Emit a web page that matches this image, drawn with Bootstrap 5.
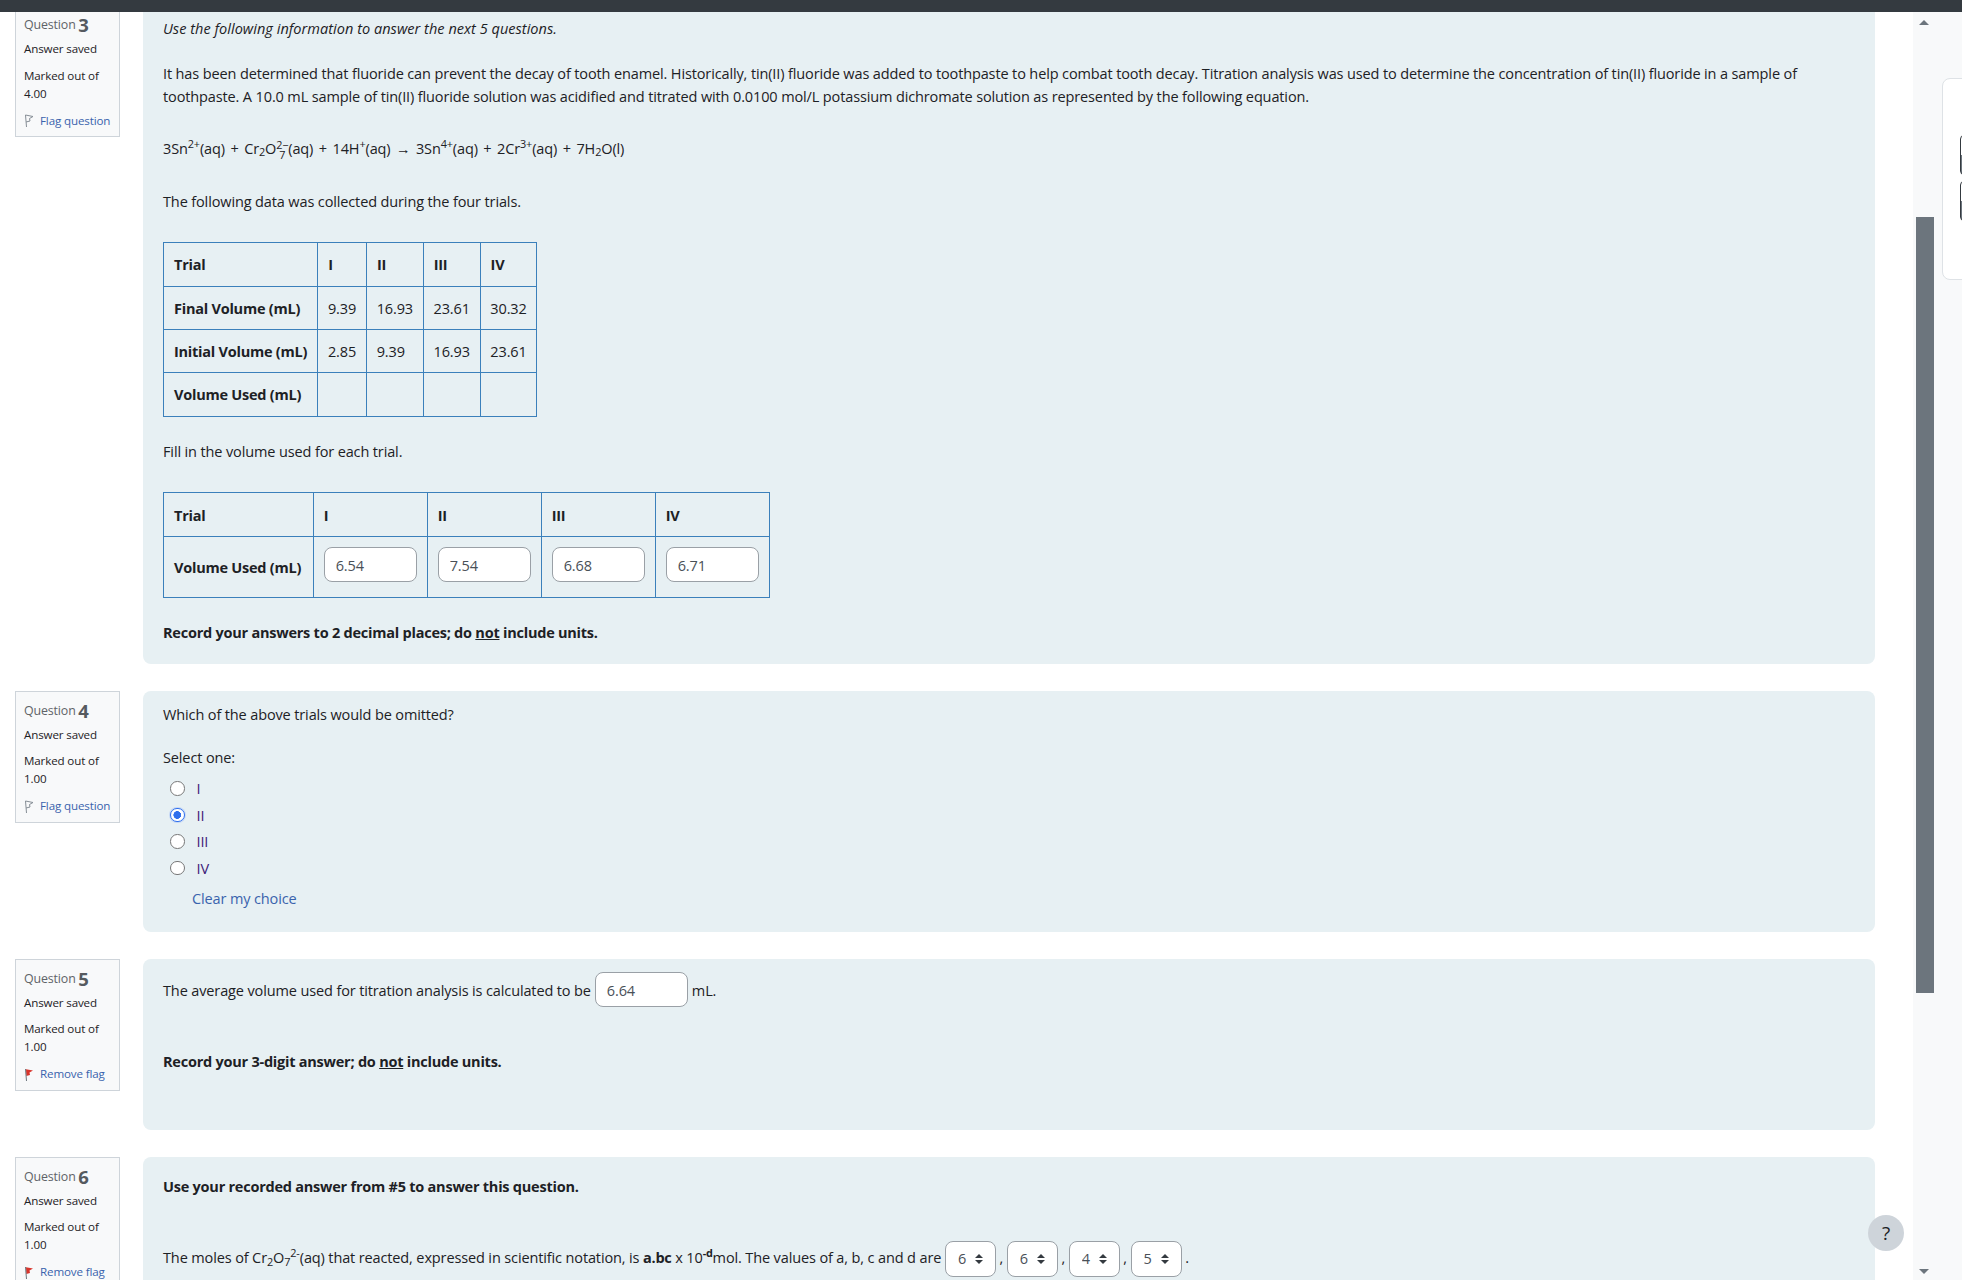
<!DOCTYPE html>
<html lang="en">
<head>
<meta charset="utf-8">
<title>Quiz</title>
<link href="https://cdn.jsdelivr.net/npm/bootstrap@5.3.0/dist/css/bootstrap.min.css" rel="stylesheet">
<style>
html,body{height:1280px;overflow:hidden;background:#fff}
body{font-family:"Open Sans","Noto Sans",sans-serif;font-size:14.53px;line-height:24px;color:#1d2125;letter-spacing:-.135px}
b,.fw-bold,th{letter-spacing:-.24px}
.fst-italic{letter-spacing:.03px}
.topstrip{height:12px;background:#343a40}
.shell{height:1268px}
.pagecol{flex:1 1 auto;min-width:0;overflow:hidden;padding:0 38px 0 15px}
.qrow{gap:23px;margin-bottom:27px}
.qinfo{flex:0 0 105px;width:105px;background:#f8f9fa;border:1px solid #ced4da;padding:0 8px 6px;font-size:11.6px;line-height:18px;height:132px}
.qinfo.cut{border-top:0;height:125px}
.qinfo p{margin:0}
.qtitle{color:#5f6368;font-size:12.4px;height:24px;margin-top:6.5px;display:flex;align-items:center;gap:2.5px}
.qinfo.cut .qtitle{margin-top:1px;height:24px}
.qtitle b{font-size:18.5px;color:#555a5f;letter-spacing:0}
.qinfo .qstate{height:23px;margin-bottom:6.5px;padding-top:3px}
.qflag{display:flex;align-items:center;gap:6px;margin-top:9.25px;color:#3a63ad;white-space:nowrap}
.qflag svg{flex:none}
.qbody{flex:1 1 auto;min-width:0;background:#e7f0f3;border-radius:8px;padding:0 20px}
.qbody.cut{border-top-left-radius:0;border-top-right-radius:0;height:652px}
.qbody p{margin:0}
.ionstack{display:inline-flex;flex-direction:column;vertical-align:middle;font-size:10.8px;line-height:10px;text-align:center}
.eqline{word-spacing:1.9px}
.datatable{width:auto;margin:0;--bs-table-bg:transparent;--bs-table-border-color:#3b80bb;--bs-table-color:#1d2125;border-color:#3b80bb}
.datatable td,.datatable th{padding:9px 10px;line-height:24px;font-weight:400;vertical-align:middle}
.datatable th{font-weight:700}
.tbl1 td,.tbl1 th{height:43.4px;white-space:nowrap}
.tbl1 td{padding:9px 9.75px}
.tbl2 tr:first-child th{height:44.5px}
.tbl2 th:first-child{padding-right:11.5px}
.tbl2 .colw{width:114px}
.tbl2 .ans{padding:10px 10px 15px}
.ans-input{width:93px;height:35px;padding:0 11px;font-size:14.53px;letter-spacing:-.135px;font-family:inherit;color:#495057;border:1px solid #9aa0a6;border-radius:8px;background:#fff;box-shadow:none}
.choice{height:26.6px;margin:0;padding-left:32px;display:flex;align-items:center;color:#3d1a78}
.choice .form-check-input{float:none;margin:0 12px 0 -25px;width:14.5px;height:14.5px;border-color:#777}
.choice .form-check-input:checked{background-color:#fff;background-image:radial-gradient(circle,#2f6fed 0 3.6px,#fff 4.1px);border-color:#2f6fed;box-shadow:0 0 0 1px #c6d8f5}
.clearlink{color:#3a63ad;text-decoration:none;margin-left:29px;margin-top:4.5px}
.ddl{display:inline-block;width:51px;height:36px;padding:0 0 0 12px;font-size:14.53px;font-family:inherit;color:#495057;border:1px solid #9aa0a6;border-radius:8px;vertical-align:middle;background-color:#fff;
 background-image:url("data:image/svg+xml,%3Csvg xmlns='http://www.w3.org/2000/svg' width='10' height='12'%3E%3Cpath d='M1 5 5 1l4 4zM1 7l4 4 4-4z' fill='%23343a40'/%3E%3C/svg%3E");background-position:right 11px center;background-size:10px 12px;background-repeat:no-repeat}
.sidepanel{flex:0 0 49px;width:49px;background:#f8f9fa;position:relative;overflow:hidden}
.sb-up,.sb-down{position:absolute;left:6px;width:0;height:0;border-left:5px solid transparent;border-right:5px solid transparent}
.sb-up{top:8px;border-bottom:5px solid #6c757d}
.sb-down{bottom:6px;border-top:5px solid #6c757d}
.sb-thumb{position:absolute;left:3px;top:205px;width:18px;height:776px;background:#6c757d}
.drawerbit{position:absolute;left:29px;top:66px;width:40px;height:202px;background:#fff;border:1px solid #dee2e6;border-radius:8px}
.drawerbit i{position:absolute;left:17px;width:10px;height:40px;border:1px solid #343a40;border-radius:4px;background:linear-gradient(#fff 50%,#6c757d 50%)}
.helpbtn{position:absolute;left:1868px;top:1215px;width:36px;height:36px;border-radius:50%;background:#ced4da;color:#1d2125;font-size:19px;line-height:36px;text-align:center}
</style>
</head>
<body>
<div class="topstrip"></div>
<div class="shell d-flex">
  <main class="pagecol">
    <section class="qrow d-flex align-items-start">
      <aside class="qinfo cut">
        <div class="qtitle">Question <b>3</b></div>
        <p class="qstate">Answer saved</p>
        <p>Marked out of<br>4.00</p>
        <div class="qflag"><svg width="10" height="13" viewBox="0 0 10 13"><path d="M2.5 13 1.5 1 9 2.5 5.5 4.5 6 7 2 8" fill="none" stroke="#868e96" stroke-width="1"/></svg>Flag question</div>
      </aside>
      <div class="qbody cut">
        <p class="fst-italic" style="padding-top:4px">Use the following information to answer the next 5 questions.</p>
        <p style="margin-top:21.5px;line-height:23px">It has been determined that fluoride can prevent the decay of tooth enamel. Historically, tin(II) fluoride was added to toothpaste to help combat tooth decay. Titration analysis was used to determine the concentration of tin(II) fluoride in a sample of toothpaste. A 10.0 mL sample of tin(II) fluoride solution was acidified and titrated with 0.0100 mol/L potassium dichromate solution as represented by the following equation.</p>
        <p class="eqline" style="margin-top:28px">3Sn<sup>2+</sup>(aq) + Cr<sub>2</sub>O<span class="ionstack"><span>2−</span><span>7</span></span>(aq) + 14H<sup>+</sup>(aq) → 3Sn<sup>4+</sup>(aq) + 2Cr<sup>3+</sup>(aq) + 7H<sub>2</sub>O(l)</p>
        <p style="margin-top:29.5px">The following data was collected during the four trials.</p>
        <div style="margin-top:29px">
        <table class="table table-bordered datatable tbl1"><tbody>
          <tr><th>Trial</th><th>I</th><th>II</th><th>III</th><th>IV</th></tr>
          <tr><th>Final Volume (mL)</th><td>9.39</td><td>16.93</td><td>23.61</td><td>30.32</td></tr>
          <tr><th>Initial Volume (mL)</th><td>2.85</td><td>9.39</td><td>16.93</td><td>23.61</td></tr>
          <tr><th>Volume Used (mL)</th><td></td><td></td><td></td><td></td></tr>
        </tbody></table></div>
        <p style="margin-top:22px">Fill in the volume used for each trial.</p>
        <div style="margin-top:29.25px">
        <table class="table table-bordered datatable tbl2"><tbody>
          <tr><th>Trial</th><th class="colw">I</th><th class="colw">II</th><th class="colw">III</th><th class="colw">IV</th></tr>
          <tr><th class="text-nowrap">Volume Used (mL)</th>
            <td class="ans"><input class="form-control ans-input" value="6.54"></td>
            <td class="ans"><input class="form-control ans-input" value="7.54"></td>
            <td class="ans"><input class="form-control ans-input" value="6.68"></td>
            <td class="ans"><input class="form-control ans-input" value="6.71"></td></tr>
        </tbody></table></div>
        <p class="fw-bold" style="margin-top:21.5px">Record your answers to 2 decimal places; do <u>not</u> include units.</p>
      </div>
    </section>

    <section class="qrow d-flex align-items-start">
      <aside class="qinfo">
        <div class="qtitle">Question <b>4</b></div>
        <p class="qstate">Answer saved</p>
        <p>Marked out of<br>1.00</p>
        <div class="qflag"><svg width="10" height="13" viewBox="0 0 10 13"><path d="M2.5 13 1.5 1 9 2.5 5.5 4.5 6 7 2 8" fill="none" stroke="#868e96" stroke-width="1"/></svg>Flag question</div>
      </aside>
      <div class="qbody" style="height:241px;padding-top:11px">
        <p>Which of the above trials would be omitted?</p>
        <p style="margin-top:19px;margin-bottom:6px">Select one:</p>
        <div class="form-check choice"><input class="form-check-input" type="radio" name="q4"><label>I</label></div>
        <div class="form-check choice"><input class="form-check-input" type="radio" name="q4" checked><label>II</label></div>
        <div class="form-check choice"><input class="form-check-input" type="radio" name="q4"><label>III</label></div>
        <div class="form-check choice"><input class="form-check-input" type="radio" name="q4"><label>IV</label></div>
        <a class="clearlink d-inline-block" href="#">Clear my choice</a>
      </div>
    </section>

    <section class="qrow d-flex align-items-start">
      <aside class="qinfo">
        <div class="qtitle">Question <b>5</b></div>
        <p class="qstate">Answer saved</p>
        <p>Marked out of<br>1.00</p>
        <div class="qflag"><svg width="10" height="13" viewBox="0 0 10 13"><path d="M2 1.2 9 2.5 5.5 4.5 6 7 2.3 8z" fill="#d9342b"/><path d="M2.5 13 1.5 1" stroke="#6c757d"/></svg>Remove flag</div>
      </aside>
      <div class="qbody" style="height:171px;padding-top:13px">
        <p class="d-flex align-items-center gap-1">The average volume used for titration analysis is calculated to be <input class="form-control ans-input" value="6.64"> mL.</p>
        <p class="fw-bold" style="margin-top:42px">Record your 3-digit answer; do <u>not</u> include units.</p>
      </div>
    </section>

    <section class="qrow d-flex align-items-start">
      <aside class="qinfo">
        <div class="qtitle">Question <b>6</b></div>
        <p class="qstate">Answer saved</p>
        <p>Marked out of<br>1.00</p>
        <div class="qflag"><svg width="10" height="13" viewBox="0 0 10 13"><path d="M2 1.2 9 2.5 5.5 4.5 6 7 2.3 8z" fill="#d9342b"/><path d="M2.5 13 1.5 1" stroke="#6c757d"/></svg>Remove flag</div>
      </aside>
      <div class="qbody" style="height:200px;padding-top:17px">
        <p class="fw-bold">Use your recorded answer from #5 to answer this question.</p>
        <p style="margin-top:43px">The moles of Cr<sub>2</sub>O<sub>7</sub><sup>2-</sup>(aq) that reacted, expressed in scientific notation, is <b>a.bc</b> x 10<sup><b>-d</b></sup>mol. The values of a, b, c and d are
          <select class="form-select ddl"><option>6</option></select> ,
          <select class="form-select ddl"><option>6</option></select> ,
          <select class="form-select ddl"><option>4</option></select> ,
          <select class="form-select ddl"><option>5</option></select> .</p>
      </div>
    </section>
  </main>
  <aside class="sidepanel">
    <div class="sb-up"></div>
    <div class="sb-thumb"></div>
    <div class="sb-down"></div>
    <div class="drawerbit"><i style="top:56px"></i><i style="top:102px"></i></div>
  </aside>
</div>
<div class="helpbtn">?</div>
</body>
</html>
